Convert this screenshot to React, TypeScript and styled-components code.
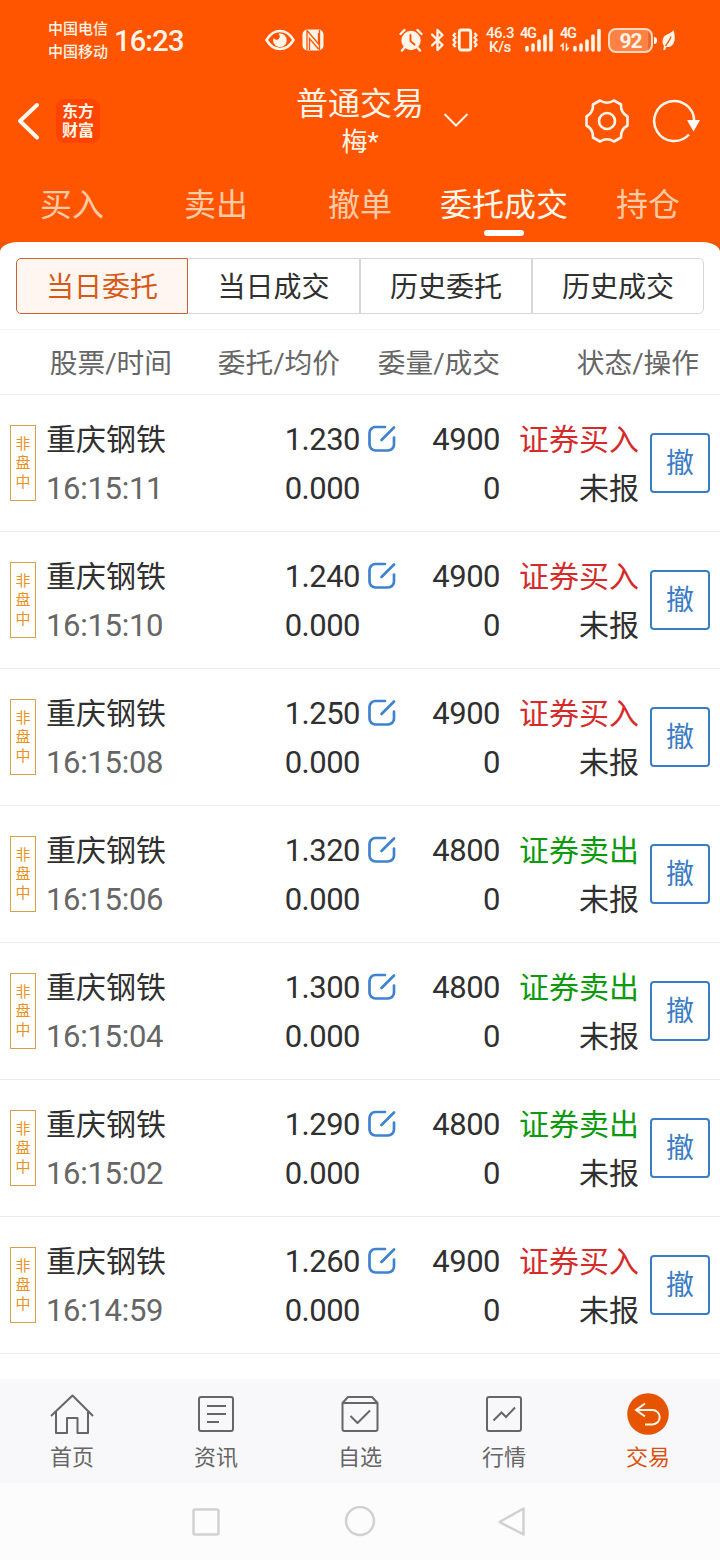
import React from "react";
import styled, { createGlobalStyle } from "styled-components";

const GlobalStyle = createGlobalStyle`
  *, *::before, *::after { box-sizing: border-box; }
  body {
    margin: 0;
    background: #fff;
    font-family: Roboto, "Noto Sans CJK SC", sans-serif;
    color: #303030;
  }
  svg { display: block; flex: none; }
`;

const Screen = styled.div`
  width: 720px;
  height: 1560px;
  display: flex;
  flex-direction: column;
  background: #fff;
  overflow: hidden;
`;

const Top = styled.header`
  height: 242px;
  flex: none;
  background: #ff5500;
  color: #fff4e8;
  display: flex;
  flex-direction: column;
`;

const StatusBar = styled.div`
  height: 80px;
  display: flex;
  align-items: center;
  padding-left: 48px;
`;

const StatusItem = styled.div<{ $gap: number; $width: number }>`
  flex: none;
  width: ${(p) => p.$width}px;
  margin-left: ${(p) => p.$gap}px;
`;

const Carriers = styled.div`
  width: 62px;
  padding-top: 1px;
  font-size: 15px;
  line-height: 23px;
  font-weight: 500;
  white-space: nowrap;
`;

const Clock = styled.div`
  width: 76px;
  margin-left: 4px;
  font-size: 29px;
  line-height: 40px;
  font-weight: 500;
  letter-spacing: -0.8px;
  padding-top: 2px;
`;

const Speed = styled.div`
  font-size: 15px;
  line-height: 14px;
  font-weight: 500;
  letter-spacing: -0.4px;
  text-align: center;
  white-space: nowrap;
`;

const Battery = styled.div`
  flex: none;
  position: relative;
  width: 45px;
  height: 25px;
  margin-left: 6px;
  border: 2px solid #ffd9bf;
  border-radius: 8px;
  background: linear-gradient(90deg, #ff8144 0 38px, #e96a2c 38px);
  font-size: 21px;
  line-height: 22px;
  font-weight: 700;
  letter-spacing: -1px;
  text-align: center;
  &::after {
    content: "";
    position: absolute;
    right: -6px;
    top: 7px;
    width: 3px;
    height: 7px;
    border-radius: 0 3px 3px 0;
    background: #fff4e8;
  }
`;

const TitleBar = styled.div`
  height: 90px;
  display: grid;
  grid-template-columns: 240px 240px 240px;
`;

const TitleLeft = styled.div`
  display: flex;
  align-items: center;
  gap: 16px;
  padding: 0 0 8px 17px;
`;

const Logo = styled.div`
  width: 44px;
  height: 44px;
  border-radius: 8px;
  background: #ff4400;
  font-family: "Noto Sans CJK SC", sans-serif;
  font-weight: 700;
  font-size: 16px;
  line-height: 19px;
  padding-top: 2px;
  text-align: center;
`;

const TitleCenter = styled.div`
  display: flex;
  justify-content: center;
  position: relative;
  text-align: center;
`;

const Title = styled.div`
  font-size: 32px;
  line-height: 40px;
  padding-top: 4px;
`;

const Account = styled.div`
  font-size: 26px;
  line-height: 37px;
`;

const TitleArrow = styled.div`
  position: absolute;
  left: 203px;
  top: 32px;
`;

const TitleRight = styled.div`
  display: flex;
  align-items: center;
  gap: 22px;
  padding: 0 0 9px 104px;
`;

const Tabs = styled.nav`
  display: grid;
  grid-template-columns: repeat(5, 144px);
  height: 72px;
`;

const Tab = styled.div<{ $active?: boolean }>`
  display: flex;
  flex-direction: column;
  align-items: center;
  font-size: 32px;
  line-height: 48px;
  padding-top: 11px;
  white-space: nowrap;
  color: ${(p) => (p.$active ? "#fff8ee" : "#ffcba6")};
  &::after {
    content: "";
    width: 40px;
    height: 6px;
    margin-top: 1px;
    border-radius: 3px;
    background: ${(p) => (p.$active ? "#fff" : "transparent")};
  }
`;

const SheetBack = styled.div`
  flex: none;
  background: linear-gradient(#e95505 0 10px, #fff 10px);
`;

const SegmentArea = styled.div`
  height: 88px;
  padding: 16px;
  background: #fff;
  border-radius: 18px 18px 0 0 / 10px 10px 0 0;
  border-bottom: 1px solid #f5f5f5;
`;

const Segments = styled.div`
  display: grid;
  grid-template-columns: repeat(4, 172px);
  height: 56px;
`;

const Segment = styled.div<{ $active?: boolean }>`
  font-size: 28px;
  line-height: 54px;
  padding-top: 2px;
  height: 56px;
  text-align: center;
  border: 1px solid ${(p) => (p.$active ? "#c5642f" : "#d6d8d8")};
  background: ${(p) => (p.$active ? "#fff5f1" : "#fff")};
  color: ${(p) => (p.$active ? "#d65a16" : "#303030")};
  &:first-child { border-radius: 5px 0 0 5px; }
  &:nth-child(2) { border-left: 0; }
  &:last-child { border-radius: 0 5px 5px 0; }
`;

const ColumnHeads = styled.div`
  flex: none;
  display: grid;
  grid-template-columns: 172px 168px 160px 199px;
  height: 65px;
  line-height: 65px;
  padding-top: 1px;
  font-size: 27.7px;
  color: #666;
  text-align: right;
  border-bottom: 1px solid #ececec;
`;

const Row = styled.div`
  height: 137px;
  flex: none;
  display: grid;
  grid-template-columns: 26px 164px 160px 40px 100px 139px 60px;
  align-items: center;
  padding-left: 10px;
  border-bottom: 1px solid #ececec;
`;

const Badge = styled.div`
  width: 26px;
  height: 76px;
  border: 1px solid #d8a04e;
  color: #e8921f;
  font-size: 15px;
  line-height: 19px;
  text-align: center;
  padding: 9px 4px;
  word-break: break-all;
`;

const Pair = styled.div`
  text-align: right;
  padding-top: 1px;
  font-size: 30px;
  line-height: 49px;
  white-space: nowrap;
`;

const NamePair = styled(Pair)`
  text-align: left;
  padding-left: 10px;
`;

const Digits = styled.div`
  font-size: 31px;
  letter-spacing: -0.5px;
`;

const Time = styled(Digits)`
  letter-spacing: -0.3px;
  color: #666;
`;

const Side = styled.div<{ $sell?: boolean }>`
  color: ${(p) => (p.$sell ? "#0b9a0b" : "#d52b2b")};
`;

const EditSlot = styled.div`
  height: 98px;
  padding: 10px 0 0 8px;
`;

const CancelButton = styled.button`
  width: 60px;
  height: 60px;
  margin-left: 11px;
  padding: 2px 0 0;
  border: 2px solid #3b7cc6;
  border-radius: 4px;
  background: #fff;
  color: #3b7cc6;
  font: 28px/54px Roboto, "Noto Sans CJK SC", sans-serif;
`;

const BottomNav = styled.nav`
  flex: none;
  height: 104px;
  margin-top: 25px;
  display: grid;
  grid-template-columns: repeat(5, 144px);
  background: #f8f8fb;
`;

const NavItem = styled.div<{ $active?: boolean }>`
  display: flex;
  flex-direction: column;
  align-items: center;
  padding-top: 13px;
  font-size: 22px;
  line-height: 32px;
  color: ${(p) => (p.$active ? "#dc5310" : "#666")};
  svg { margin-bottom: 6px; }
`;

const SystemNav = styled.div`
  flex: 1;
  background: #fcfcfc;
  display: flex;
  justify-content: center;
  gap: 122px;
  padding-top: 23px;
`;

const Ink = "#fff4e8";

const Eye = () => (
  <svg width="30" height="22" viewBox="0 0 30 22" fill="none">
    <path d="M1.500 11C5 5 9.500 2 15 2s10 3 13.500 9C25 17 20.500 20 15 20S5 17 1.500 11Z" stroke={Ink} strokeWidth="2.600" />
    <path d="M15 4.500a6.800 6.800 0 1 1-6.300 4.200c1 2.300 3.800 2.600 5.200 1 1.400-1.700.9-4-.5-5Z" fill={Ink} />
  </svg>
);

const Nfc = () => (
  <svg width="22" height="22" viewBox="0 0 22 22" fill="none">
    <rect x="0.500" y="0.500" width="21" height="21" rx="5" fill={Ink} />
    <path d="M5 1v20M5.500 2 16.500 15V4M7.500 21V9.500L16.500 20M17.500 1v20" stroke="#ff5500" strokeWidth="1.300" />
  </svg>
);

const Alarm = () => (
  <svg width="24" height="24" viewBox="0 0 24 24" fill="none" strokeLinecap="round">
    <circle cx="12" cy="12.500" r="9.700" fill={Ink} />
    <path d="M1.500 6 5.500 2M22.500 6l-4-4M5.500 19.500l-2.500 3M18.500 19.500l2.500 3" stroke={Ink} strokeWidth="2.400" />
    <path d="M11.500 7v6l4 3.500" stroke="#ff5500" strokeWidth="1.900" />
  </svg>
);

const Bluetooth = () => (
  <svg width="15" height="24" viewBox="0 0 15 24" fill="none" stroke={Ink} strokeWidth="2.400" strokeLinejoin="round" strokeLinecap="round">
    <path d="m2 6.500 10.500 10.500-5 5V2l5 5L2 17.500" />
  </svg>
);

const Vibrate = () => (
  <svg width="28" height="24" viewBox="0 0 28 24" fill="none" stroke={Ink}>
    <rect x="8.300" y="2" width="11.400" height="20" rx="2" strokeWidth="2.800" />
    <path d="m4.500 5-2 2.300 2 2.300-2 2.400 2 2.300-2 2.400 2 2.300M23.500 5l2 2.300-2 2.300 2 2.400-2 2.300 2 2.400-2 2.300" strokeWidth="2.200" />
  </svg>
);

const SignalWrap = styled.div`
  position: relative;
  height: 24px;
`;

const NetLabel = styled.span`
  position: absolute;
  left: 0;
  top: -1px;
  font-size: 14.500px;
  line-height: 14px;
  font-weight: 600;
  letter-spacing: -1.400px;
`;

const Signal = ({ arrows }: { arrows?: boolean }) => (
  <SignalWrap>
    <NetLabel>4G</NetLabel>
    <svg width={arrows ? 42 : 34} height="24" viewBox={arrows ? "-8 0 42 24" : "0 0 34 24"} fill="none" stroke={Ink} strokeLinecap="round">
      <path d="M7 19.500v2.500M13 17v5M19 13v9M25 8v14M31 2.500v19.500" strokeWidth="3.600" />
      {arrows && <path d="m-7 18 2-2v6M-1.500 16v6l2-2" strokeWidth="1.500" />}
    </svg>
  </SignalWrap>
);

const Leaf = () => (
  <svg width="14" height="22" viewBox="0 0 14 22">
    <path d="M11.500 1C13.500 8 13.500 15 8.500 17.500c-1.500.8-3 .6-4 .2L3 21H1.200L2 17C-1 12 1 7 5 5.500 8 4.300 10 3 11.500 1Z" fill={Ink} />
    <path d="M9 7.500C8 11 6 13.500 3.500 17" stroke="#ff5500" strokeWidth="1.200" fill="none" />
  </svg>
);

const Back = () => (
  <svg width="23" height="38" viewBox="0 0 23 38" fill="none" stroke="#fff8ee" strokeWidth="4" strokeLinecap="round" strokeLinejoin="round">
    <path d="M20 3 3 19 20 35.500" />
  </svg>
);

const Chevron = () => (
  <svg width="26" height="16" viewBox="0 0 26 16" fill="none" stroke={Ink} strokeWidth="2">
    <path d="m1.500 2 11.500 11.500L24.500 2" />
  </svg>
);

const Gear = () => (
  <svg width="46" height="46" viewBox="0 0 46 46" fill="none" stroke={Ink} strokeWidth="2.600" strokeLinejoin="round">
    <path d="M16 2.500Q23 7 30 2.500L37 6.500Q36.500 14.500 43.500 18.500V27.500Q36.500 31.500 37 39.500L30 43.500Q23 39 16 43.500L9 39.500Q9.500 31.500 2.500 27.500V18.500Q9.500 14.500 9 6.500Z" />
    <circle cx="23" cy="23" r="8" />
  </svg>
);

const Refresh = () => (
  <svg width="48" height="46" viewBox="0 0 48 46" fill="none">
    <path d="M37 36.500A20 20 0 1 1 42.200 23" stroke={Ink} strokeWidth="2.600" />
    <path d="M35 22h13L41.500 33.500Z" fill="#fff" />
  </svg>
);

const Edit = () => (
  <svg width="29" height="29" viewBox="0 0 29 29" fill="none" stroke="#3f83cf" strokeWidth="2.700" strokeLinecap="round">
    <path d="M17 3H7.500a6 6 0 0 0-6 6V20.500a6 6 0 0 0 6 6H20a6 6 0 0 0 6-6V13.500M13.500 16 26 3.500" />
  </svg>
);

const navLine = { fill: "none", stroke: "#666", strokeWidth: 2 } as const;

const Home = () => (
  <svg width="44" height="44" viewBox="0 0 44 44" {...navLine}>
    <path d="M1 24 22.500 3.500 43 24M6 20v21h11V26h10.500v15H38V20" strokeLinejoin="round" />
  </svg>
);

const News = () => (
  <svg width="44" height="44" viewBox="0 0 44 44" {...navLine}>
    <rect x="5" y="5" width="34" height="34" rx="2" />
    <path d="M13 14h19M13 22h19M13 30h12" />
  </svg>
);

const Watch = () => (
  <svg width="44" height="44" viewBox="0 0 44 44" {...navLine}>
    <path d="M4.500 11 10 5h24L39.500 11v26a2 2 0 0 1-2 2h-31a2 2 0 0 1-2-2ZM4.500 11h35M12.500 24l7 7 12.500-12.500" strokeLinejoin="round" />
  </svg>
);

const Market = () => (
  <svg width="44" height="44" viewBox="0 0 44 44" {...navLine}>
    <rect x="5" y="5" width="34" height="34" rx="2" />
    <path d="m11.500 28.500 8-8 4.500 4.500 9-9.500" />
  </svg>
);

const Trade = () => (
  <svg width="44" height="44" viewBox="0 0 44 44" fill="none">
    <circle cx="22" cy="22" r="20.800" fill="#e65400" />
    <path d="m19 11.500-9 6.500 9 6.500M10 18h16.500a7.200 7.200 0 0 1 0 14.400H19" stroke={Ink} strokeWidth="2" />
  </svg>
);

type Order = { time: string; price: string; qty: string; sell?: boolean };

const orders: Order[] = [
  { time: "16:15:11", price: "1.230", qty: "4900" },
  { time: "16:15:10", price: "1.240", qty: "4900" },
  { time: "16:15:08", price: "1.250", qty: "4900" },
  { time: "16:15:06", price: "1.320", qty: "4800", sell: true },
  { time: "16:15:04", price: "1.300", qty: "4800", sell: true },
  { time: "16:15:02", price: "1.290", qty: "4800", sell: true },
  { time: "16:14:59", price: "1.260", qty: "4900" },
];

const OrderRow = ({ order }: { order: Order }) => (
  <Row>
    <Badge>非盘中</Badge>
    <NamePair>
      <div>重庆钢铁</div>
      <Time>{order.time}</Time>
    </NamePair>
    <Pair>
      <Digits>{order.price}</Digits>
      <Digits>0.000</Digits>
    </Pair>
    <EditSlot>
      <Edit />
    </EditSlot>
    <Pair>
      <Digits>{order.qty}</Digits>
      <Digits>0</Digits>
    </Pair>
    <Pair>
      <Side $sell={order.sell}>{order.sell ? "证券卖出" : "证券买入"}</Side>
      <div>未报</div>
    </Pair>
    <CancelButton>撤</CancelButton>
  </Row>
);

export default function App() {
  return (
    <Screen>
      <GlobalStyle />
      <Top>
        <StatusBar>
          <Carriers>
            <div>中国电信</div>
            <div>中国移动</div>
          </Carriers>
          <Clock>16:23</Clock>
          <StatusItem $gap={75} $width={30}><Eye /></StatusItem>
          <StatusItem $gap={7} $width={22}><Nfc /></StatusItem>
          <StatusItem $gap={75} $width={24}><Alarm /></StatusItem>
          <StatusItem $gap={7} $width={15}><Bluetooth /></StatusItem>
          <StatusItem $gap={6} $width={28}><Vibrate /></StatusItem>
          <StatusItem $gap={6} $width={30}>
            <Speed>46.3<br />K/s</Speed>
          </StatusItem>
          <StatusItem $gap={5} $width={34}><Signal /></StatusItem>
          <StatusItem $gap={6} $width={42}><Signal arrows /></StatusItem>
          <Battery>92</Battery>
          <StatusItem $gap={9} $width={14}><Leaf /></StatusItem>
        </StatusBar>
        <TitleBar>
          <TitleLeft>
            <Back />
            <Logo>东方<br />财富</Logo>
          </TitleLeft>
          <TitleCenter>
            <div>
              <Title>普通交易</Title>
              <Account>梅*</Account>
            </div>
            <TitleArrow><Chevron /></TitleArrow>
          </TitleCenter>
          <TitleRight>
            <Gear />
            <Refresh />
          </TitleRight>
        </TitleBar>
        <Tabs>
          <Tab>买入</Tab>
          <Tab>卖出</Tab>
          <Tab>撤单</Tab>
          <Tab $active>委托成交</Tab>
          <Tab>持仓</Tab>
        </Tabs>
      </Top>
      <SheetBack>
        <SegmentArea>
          <Segments>
            <Segment $active>当日委托</Segment>
            <Segment>当日成交</Segment>
            <Segment>历史委托</Segment>
            <Segment>历史成交</Segment>
          </Segments>
        </SegmentArea>
      </SheetBack>
      <ColumnHeads>
        <div>股票/时间</div>
        <div>委托/均价</div>
        <div>委量/成交</div>
        <div>状态/操作</div>
      </ColumnHeads>
      {orders.map((o) => (
        <OrderRow key={o.time} order={o} />
      ))}
      <BottomNav>
        <NavItem><Home />首页</NavItem>
        <NavItem><News />资讯</NavItem>
        <NavItem><Watch />自选</NavItem>
        <NavItem><Market />行情</NavItem>
        <NavItem $active><Trade />交易</NavItem>
      </BottomNav>
      <SystemNav>
        <svg width="32" height="32" viewBox="0 0 32 32" fill="none" stroke="#d1d1d1" strokeWidth="2.500">
          <rect x="3.500" y="3.500" width="25" height="25" rx="1.500" />
        </svg>
        <svg width="32" height="32" viewBox="0 0 32 32" fill="none" stroke="#d1d1d1" strokeWidth="2.500">
          <circle cx="16" cy="15" r="14" />
        </svg>
        <svg width="32" height="32" viewBox="0 0 32 32" fill="none" stroke="#d1d1d1" strokeWidth="2.500" strokeLinejoin="round">
          <path d="M25.500 2.500v26L1.500 16Z" />
        </svg>
      </SystemNav>
    </Screen>
  );
}
